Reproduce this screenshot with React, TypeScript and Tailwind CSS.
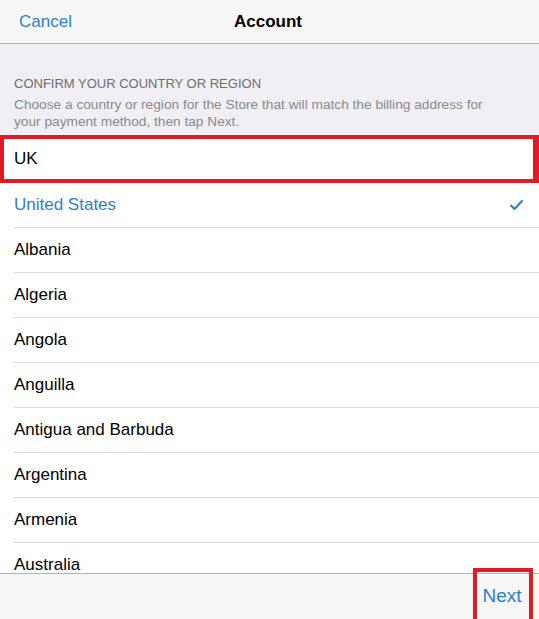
import React from 'react';

const countries = [
  'Albania',
  'Algeria',
  'Angola',
  'Anguilla',
  'Antigua and Barbuda',
  'Argentina',
  'Armenia',
  'Australia',
  'Austria',
];

const App: React.FC = () => {
  return (
    <div
      className="flex h-screen w-full flex-col overflow-hidden bg-white text-black"
      style={{ fontFamily: '"Liberation Sans", Arial, sans-serif' }}
    >
      {/* top bar */}
      <div className="relative flex h-[44px] shrink-0 items-center border-b border-[#b2b2b2] bg-[#f7f7f7]">
        <span className="pl-[19px] text-[17px] text-[#2f7fcf]">Cancel</span>
        <span className="absolute left-0 right-0 pr-[3px] text-center text-[17px] font-bold">Account</span>
      </div>

      <div className="shrink-0 bg-[#efeff4] px-[14px] pb-[5px] pt-[31px] text-[13px] leading-[17px] text-[#6d6d72]">
        <p>CONFIRM YOUR COUNTRY OR REGION</p>
        <p className="mt-[4px] max-w-[480px] text-[13.7px] text-[#8a8a8f]">
          Choose a country or region for the Store that will match the billing address for your payment method, then tap
          Next.
        </p>
      </div>

      {/* selected row, highlighted */}
      <div className="flex h-[48px] shrink-0 items-center border-[4px] border-r-[6px] border-[#e01b24] bg-white pl-[10px] text-[17px]">
        UK
      </div>

      <div className="flex-1 overflow-hidden">
        <div className="flex h-[45px] items-center pl-[14px]">
          <div className="flex h-full flex-1 items-center justify-between border-b border-[#dcdcdc] pr-[16px] text-[17px] text-[#2b7fc9]">
            <span>United States</span>
            <svg width="13" height="10" viewBox="0 0 13 10" fill="none">
              <path d="M1 5.5 L4.5 9 L12 1" stroke="#2b7fc9" strokeWidth="2" strokeLinecap="round" strokeLinejoin="round" />
            </svg>
          </div>
        </div>
        {countries.map((c) => (
          <div key={c} className="flex h-[45px] items-center pl-[14px]">
            <div className="flex h-full flex-1 items-center border-b border-[#dcdcdc] text-[17px]">{c}</div>
          </div>
        ))}
      </div>

      {/* bottom toolbar */}
      <div className="flex h-[46px] shrink-0 items-end justify-end border-t border-[#b2b2b2] bg-[#f7f7f7] pr-[6px]">
        <div className="-mt-[5px] flex h-[51px] w-[60px] items-center justify-center border-[4px] border-b-0 border-[#e01b24] pr-[2px] pt-[1px] text-[19px] text-[#1f7fd8]">
          Next
        </div>
      </div>
    </div>
  );
};

export default App;
